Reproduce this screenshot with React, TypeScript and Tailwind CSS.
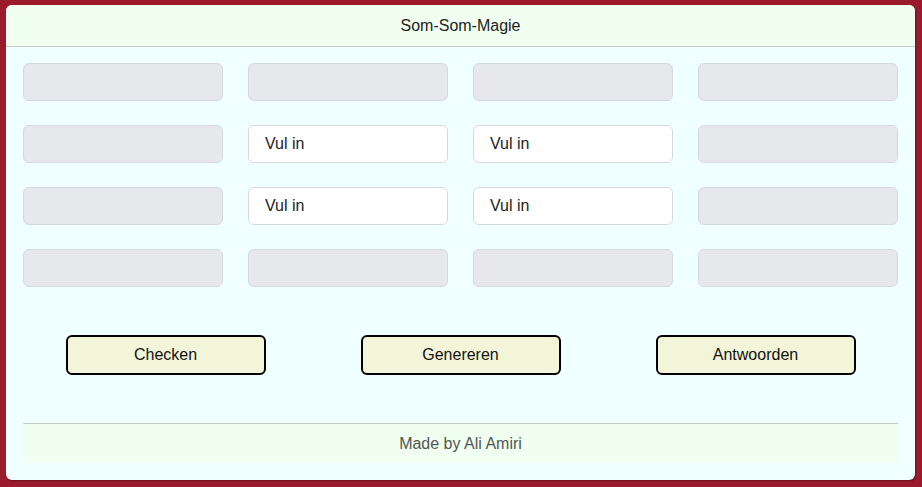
import React from "react";

// Layout of the 4x4 grid: true = editable input ("Vul in"), false = locked gray cell
const cells: boolean[][] = [
  [false, false, false, false],
  [false, true, true, false],
  [false, true, true, false],
  [false, false, false, false],
];

const buttons = ["Checken", "Genereren", "Antwoorden"];

export default function App() {
  return (
    <div
      className="h-[487px] w-full bg-[#9b1b2d] pt-[5px] pl-[6px] pr-[7px] pb-[7px]"
      style={{ fontFamily: '"Liberation Sans", Arial, sans-serif' }}
    >
      <div className="h-full w-full rounded-md bg-[#f0ffff] shadow-[1px_1px_2px_rgba(0,0,0,0.35)] flex flex-col overflow-hidden">
        {/* Header */}
        <header className="h-[42px] shrink-0 bg-[#f0fff0] border-b border-[#c3ccc3] flex items-center justify-center text-[16px] text-[#222]">
          Som-Som-Magie
        </header>

        <div className="flex-1 flex flex-col px-[17px] pt-[16px] pb-[17px]">
          {/* Grid */}
          <div className="grid grid-cols-4 gap-x-[25px] gap-y-[24px]">
            {cells.flat().map((editable, i) =>
              editable ? (
                <input
                  key={i}
                  placeholder="Vul in"
                  className="h-[38px] w-full rounded-md border border-[#d5d9de] bg-white px-[16px] text-[16px] text-[#222] placeholder:text-[#222] outline-none"
                />
              ) : (
                <div
                  key={i}
                  className="h-[38px] w-full rounded-md border border-[#d5d9de] bg-[#e6e8ec]"
                />
              )
            )}
          </div>

          {/* Buttons */}
          <div className="mt-[48px] flex justify-center gap-[95px]">
            {buttons.map((label) => (
              <button
                key={label}
                className="h-[40px] w-[200px] rounded-md border-2 border-black bg-[#f3f5d8] text-[16px] text-[#111]"
              >
                {label}
              </button>
            ))}
          </div>

          {/* Footer */}
          <footer className="mt-auto h-[40px] border-t border-[#c3ccc3] bg-[#f0fff0] rounded-b-sm flex items-center justify-center text-[16px] text-[#555]">
            Made by Ali Amiri
          </footer>
        </div>
      </div>
    </div>
  );
}
